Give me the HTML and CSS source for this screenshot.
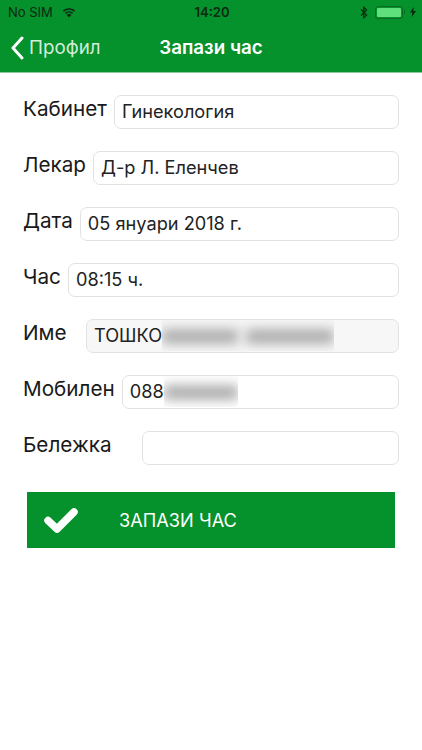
FILE: index.html
```html
<!DOCTYPE html>
<html lang="en">
  <head>
    <meta charset="UTF-8" />
    <title>Запази час</title>
    <link rel="stylesheet" href="styles.css">
  </head>
  <body>
    <header class="topbar">
      <div class="status">
        <div class="status-left">
          <span>No SIM</span>
          <svg class="wifi" width="16" height="12" viewBox="0 0 16 12">
            <path d="M8 11.5 5.6 8.7a3.6 3.6 0 0 1 4.8 0z" fill="#0c2a12"/>
            <path d="M3.9 6.8a6.2 6.2 0 0 1 8.2 0l-1 1.1a4.7 4.7 0 0 0-6.2 0z" fill="#0c2a12"/>
            <path d="M1.9 4.6a9.2 9.2 0 0 1 12.2 0l-1 1.2a7.7 7.7 0 0 0-10.2 0z" fill="#0c2a12"/>
          </svg>
        </div>
        <div class="status-time">14:20</div>
        <div class="status-right">
          <svg width="8" height="13" viewBox="0 0 8 13">
            <path d="M1 3.4 6.6 9 3.8 11.8V1.2L6.6 4 1 9.6" fill="none" stroke="#0c2a12" stroke-width="1.2"/>
          </svg>
          <div class="battery"><div class="battery-fill"></div></div>
          <div class="battery-tip"></div>
          <svg width="6" height="10" viewBox="0 0 6 10">
            <path d="M3.6 0 0 5.6h2.3L1.8 10 6 4H3.4z" fill="#0c2a12"/>
          </svg>
        </div>
      </div>
      <nav class="navbar">
        <div class="back">
          <svg width="14" height="24" viewBox="0 0 14 24">
            <path d="M12 2 3 12l9 10" fill="none" stroke="#fff" stroke-width="3" stroke-linecap="round" stroke-linejoin="round"/>
          </svg>
          <span>Профил</span>
        </div>
        <div class="nav-title">Запази час</div>
      </nav>
    </header>

    <main class="form">
      <div class="row">
        <label>Кабинет</label>
        <div class="field">Гинекология</div>
      </div>
      <div class="row">
        <label>Лекар</label>
        <div class="field">Д-р Л. Еленчев</div>
      </div>
      <div class="row">
        <label>Дата</label>
        <div class="field">05 януари 2018 г.</div>
      </div>
      <div class="row">
        <label>Час</label>
        <div class="field">08:15 ч.</div>
      </div>
      <div class="row">
        <label class="label-name">Име</label>
        <div class="field field-disabled">
          <span>ТОШКО</span>
          <div class="hidden-part"><i class="blur-first"></i><i class="blur-second"></i></div>
        </div>
      </div>
      <div class="row">
        <label>Мобилен</label>
        <div class="field">
          <span>088</span>
          <div class="hidden-part"><i class="blur-phone"></i></div>
        </div>
      </div>
      <div class="row">
        <label class="label-note">Бележка</label>
        <div class="field"></div>
      </div>

      <button class="submit">
        <svg width="34" height="26" viewBox="0 0 34 26">
          <path d="M4 13.5 13 22 30 5" fill="none" stroke="#fff" stroke-width="7.5" stroke-linejoin="round" stroke-linecap="round"/>
        </svg>
        <span>ЗАПАЗИ ЧАС</span>
      </button>
    </main>
  </body>
</html>
```

FILE: styles.css
```css
body {
  margin: 0;
  width: 422px;
  height: 750px;
  overflow: hidden;
  background: #fff;
  color: #1a1a1a;
  font-family: Inter, "Liberation Sans", sans-serif;
}
.topbar {
  background: #05912b;
  border-bottom: 1px solid #8cc79b;
  box-sizing: border-box;
  height: 73px;
}
.status {
  height: 24px;
  padding: 0 6px 0 8px;
  display: grid;
  grid-template-columns: 1fr auto 1fr;
  align-items: center;
  font-size: 13px;
  color: #0c2a12;
}
.status-left {
  display: flex;
  align-items: center;
  gap: 8px;
}
.status-time {
  font-weight: 600;
}
.status-right {
  display: flex;
  justify-content: flex-end;
  align-items: center;
}
.battery {
  margin-left: 7px;
  width: 28px;
  height: 13px;
  box-sizing: border-box;
  border: 1px solid #0d6a24;
  border-radius: 3px;
  padding: 1px;
}
.battery-fill {
  height: 100%;
  background: #5fe07c;
  border-radius: 1px;
}
.battery-tip {
  width: 1px;
  height: 4px;
  margin: 0 5px 0 1px;
  background: #0d6a24;
}
.navbar {
  position: relative;
  height: 47px;
  display: flex;
  align-items: center;
  color: #fff;
}
.back {
  display: flex;
  align-items: center;
  gap: 5px;
  padding-left: 10px;
  font-size: 18.8px;
  color: #d5ecd9;
}
.nav-title {
  position: absolute;
  left: 0;
  right: 0;
  text-align: center;
  font-size: 18.8px;
  font-weight: 600;
}
.form {
  padding: 22px 23px 0;
}
.row {
  display: flex;
  gap: 7px;
  height: 34px;
  margin-bottom: 22px;
}
.row label {
  font-size: 20.7px;
  line-height: 28px;
  white-space: nowrap;
}
.label-name {
  width: 56px;
}
.label-note {
  width: 112px;
}
.field {
  flex: 1;
  display: flex;
  align-items: center;
  box-sizing: border-box;
  border: 1px solid #e2e2e2;
  border-radius: 7px;
  padding: 0 7px 3px;
  font-size: 18.2px;
  color: #222;
  overflow: hidden;
}
.field-disabled {
  background: #f7f7f7;
}
.hidden-part {
  display: flex;
  gap: 8px;
  height: 32px;
  padding-top: 3px;
  box-sizing: border-box;
  align-items: center;
  overflow: hidden;
}
.hidden-part i {
  display: block;
  height: 15px;
  background: #adadad;
  filter: blur(6px);
}
.blur-first {
  width: 76px;
}
.blur-second {
  width: 88px;
}
.blur-phone {
  width: 74px;
}
.submit {
  display: flex;
  align-items: center;
  width: 368px;
  height: 56px;
  margin: 27px 0 0 4px;
  padding: 0 0 0 17px;
  border: none;
  background: #05912b;
  color: #fff;
  font-family: inherit;
  font-size: 18.2px;
  text-align: left;
}
.submit span {
  margin-left: 41px;
}
```
